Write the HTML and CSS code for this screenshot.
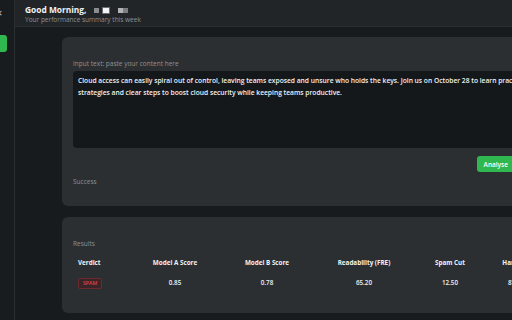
FILE: index.html
```html
<!DOCTYPE html>
<html lang="en">
<head>
    <meta charset="UTF-8">
    <meta name="viewport" content="width=device-width, initial-scale=1.0">
    <title>Dashboard</title>
    <link rel="stylesheet" href="styles.css">
</head>
<body>
    <aside class="sidebar">
        <span class="sidebar-close">&times;</span>
        <span class="sidebar-item"></span>
    </aside>

    <div class="main">
        <header class="topbar">
            <div class="greeting">
                <span>Good Morning,</span>
                <span class="blur blur-a"></span><span class="blur blur-b"></span><span class="blur blur-c"></span>
            </div>
            <div class="subtitle">Your performance summary this week</div>
        </header>

        <div class="content">
            <!-- Input card -->
            <section class="card">
                <label class="field-label" for="inputText">Input text: paste your content here</label>
                <div class="text-box" id="inputText">Cloud access can easily spiral out of control, leaving teams exposed and unsure who holds the keys. Join us on October 28 to learn practical strategies and clear steps to boost cloud security while keeping teams productive.</div>
                <div class="actions">
                    <button class="analyse-btn">Analyse</button>
                </div>
                <div class="status">Success</div>
            </section>

            <!-- Results card -->
            <section class="card results">
                <div class="field-label">Results</div>
                <div class="results-grid">
                    <div class="cell head left">Verdict</div>
                    <div class="cell head">Model A Score</div>
                    <div class="cell head">Model B Score</div>
                    <div class="cell head">Readability (FRE)</div>
                    <div class="cell head">Spam Cut</div>
                    <div class="cell head">Ham Cut</div>

                    <div class="cell left"><span class="badge-spam">SPAM</span></div>
                    <div class="cell">0.85</div>
                    <div class="cell">0.78</div>
                    <div class="cell">65.20</div>
                    <div class="cell">12.50</div>
                    <div class="cell">87.50</div>
                </div>
            </section>
        </div>
    </div>
</body>
</html>
```

FILE: styles.css
```css
:root {
    --page-bg: #181b1e;
    --header-bg: #222528;
    --card-bg: #2c2f32;
    --input-bg: #15181b;
    --line: #2b2e31;
    --text: #f1f2f3;
    --muted: #8c9196;
    --green: #2fb84f;
}

body {
    margin: 0;
    width: 512px;
    height: 320px;
    overflow: hidden;
    display: flex;
    background-color: var(--page-bg);
    color: var(--text);
    font-family: 'Open Sans', 'Noto Sans', sans-serif;
}

/* Sidebar */
.sidebar {
    width: 14px;
    flex-shrink: 0;
    border-right: 1px solid var(--line);
    background-color: #191c1f;
    display: flex;
    flex-direction: column;
    overflow: hidden;
}

.sidebar-close {
    margin: 8px 0 0 -4px;
    font-size: 11px;
    line-height: 10px;
    color: #d8dadc;
}

.sidebar-item {
    display: block;
    width: 14px;
    height: 17px;
    margin: 17px 0 0 -7px;
    border-radius: 3px;
    background-color: var(--green);
}

/* Main area */
.main {
    flex: 1;
    display: flex;
    flex-direction: column;
    min-width: 0;
}

.topbar {
    height: 27px;
    padding: 4px 0 0 10px;
    box-sizing: border-box;
    background-color: var(--header-bg);
    border-bottom: 1px solid var(--line);
}

.greeting {
    font-size: 8.4px;
    font-weight: 700;
    line-height: 12px;
    display: flex;
    align-items: center;
}

.blur {
    display: inline-block;
    height: 5px;
}

.blur-a {
    width: 5px;
    margin-left: 8px;
    background-color: #8a8d90;
}

.blur-b {
    width: 6px;
    margin-left: 4px;
    background-color: #f4f4f4;
    box-shadow: 0 0 0 1px #6a6d70;
}

.blur-c {
    width: 10px;
    margin-left: 9px;
    background: linear-gradient(to right, #b0b2b4 50%, #7b7e81 50%);
}

.subtitle {
    font-size: 6.5px;
    line-height: 8px;
    color: var(--muted);
}

.content {
    padding: 10px 0 0 47px;
    display: flex;
    flex-direction: column;
    gap: 11px;
}

/* Cards */
.card {
    width: 490px;
    box-sizing: border-box;
    padding: 22px 11px 20px;
    background-color: var(--card-bg);
    border-radius: 6px;
}

.field-label {
    display: block;
    font-size: 6.5px;
    line-height: 9px;
    color: var(--muted);
    margin-bottom: 3px;
}

.text-box {
    height: 77px;
    box-sizing: border-box;
    padding: 4px 5px;
    background-color: var(--input-bg);
    border-radius: 4px;
    font-size: 6.7px;
    font-weight: 600;
    line-height: 12px;
    color: var(--text);
    overflow: hidden;
}

.actions {
    display: flex;
    justify-content: flex-end;
    margin-top: 8px;
}

.analyse-btn {
    height: 16px;
    padding: 0 7px;
    margin-right: 26px;
    border: none;
    border-radius: 3px;
    background-color: var(--green);
    color: #ffffff;
    font-family: inherit;
    font-size: 6.5px;
    font-weight: 600;
    cursor: pointer;
}

.status {
    margin-top: 5px;
    font-size: 6.5px;
    line-height: 9px;
    color: var(--muted);
}

/* Results */
.results {
    padding: 22px 11px 24px;
}

.results-grid {
    display: grid;
    grid-template-columns: 57px 90px 94px 100px 72px 60px;
    row-gap: 10px;
    margin-top: 10px;
    font-size: 6.3px;
}

.cell {
    text-align: center;
    line-height: 10px;
    font-weight: 600;
}

.cell.head {
    font-weight: 700;
}

.cell.left {
    text-align: left;
    padding-left: 5px;
}

.badge-spam {
    display: inline-block;
    padding: 0 4px;
    line-height: 9px;
    font-size: 5.2px;
    font-weight: 600;
    color: #e0424a;
    background-color: #3b2427;
    border: 1px solid #6a2a2f;
    border-radius: 2px;
}
```
